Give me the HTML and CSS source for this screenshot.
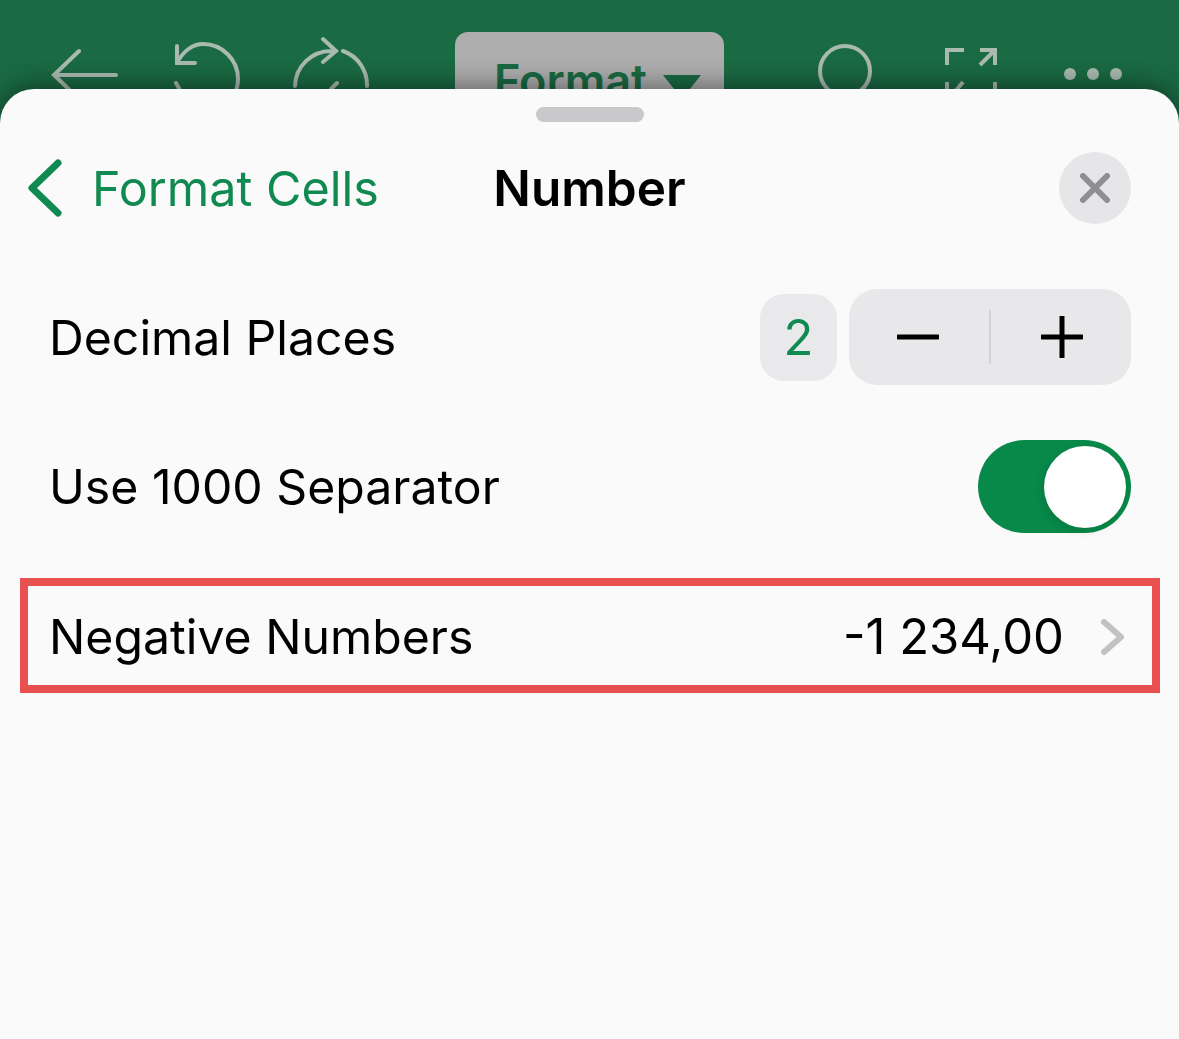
FILE: index.html
```html
<!DOCTYPE html>
<html lang="en">
<head>
    <meta charset="UTF-8">
    <title>Number format</title>
    <link rel="stylesheet" href="styles.css">
</head>
<body>
    <!-- toolbar, mostly hidden behind the sheet -->
    <div class="toolbar">
        <svg class="tool tool_back" viewBox="0 0 66 70"><path d="M64 26H3M27 2 2 26l25 24"/></svg>
        <svg class="tool tool_undo" viewBox="0 0 66 74"><path d="M2 3V20H20M2 20C8 8 18 1 28 1A35 35 0 0 1 63 36C63 54 48 71 28 71M1 40l5 9"/></svg>
        <svg class="tool tool_redo" viewBox="0 0 76 70"><path d="M30 1 43 13 30 24M43 13H38A36 36 0 0 0 2 48M50 13A36 36 0 0 1 74 48M38 51l6-6"/></svg>
        <div class="format_btn">
            <span class="format_txt">Format</span>
            <span class="format_arrow"></span>
        </div>
        <svg class="tool tool_search" viewBox="0 0 56 70"><circle cx="27" cy="27" r="25"/><path d="M44 45l12 12"/></svg>
        <svg class="tool tool_expand" viewBox="0 0 54 70"><path d="M19 3H2V18M35 18 50 3M35 3H50V18M2 35V52M18 35 4 52M50 35V52"/></svg>
        <div class="dots"><span></span><span></span><span></span></div>
    </div>

    <!-- sheet -->
    <div class="sheet">
        <div class="handle"></div>
        <div class="sheet_h">
            <div class="back">
                <svg class="back_icon" viewBox="0 0 36 58"><path d="M31 4 5 29l26 25"/></svg>
                <span>Format Cells</span>
            </div>
            <div class="title">Number</div>
            <div class="close">
                <svg viewBox="0 0 30 30"><path d="M3 3l24 24M27 3 3 27"/></svg>
            </div>
        </div>

        <div class="row row_decimal">
            <div class="label">Decimal Places</div>
            <div class="value_box">2</div>
            <div class="stepper">
                <svg class="step_icon" viewBox="0 0 42 42"><path d="M1 21h40"/></svg>
                <div class="step_line"></div>
                <svg class="step_icon" viewBox="0 0 42 42"><path d="M1 21h40M21 1v40"/></svg>
            </div>
        </div>

        <div class="row row_separator">
            <div class="label">Use 1000 Separator</div>
            <div class="switch"><div class="knob"></div></div>
        </div>

        <div class="row_negative">
            <div class="label">Negative Numbers</div>
            <div class="value">-1 234,00</div>
            <svg class="chevron" viewBox="0 0 24 36"><path d="M3 3l17 15L3 33"/></svg>
        </div>
    </div>
</body>
</html>
```

FILE: styles.css
```css
* {
    box-sizing: border-box;
}
html, body {
    height: 100%;
}
body {
    margin: 0;
    height: 1039px;
    overflow: hidden;
    background-color: #1a6a43;
    font-family: Inter, "Liberation Sans", sans-serif;
    color: #000;
}

/* toolbar */
.toolbar {
    display: flex;
    align-items: flex-start;
    height: 89px;
    overflow: hidden;
    padding-left: 52px;
}
.tool {
    flex: none;
    fill: none;
    stroke: #a9baaf;
    stroke-width: 4;
    stroke-linecap: round;
    overflow: visible;
}
.tool_back {
    width: 66px;
    height: 70px;
    margin-top: 49px;
}
.tool_undo {
    width: 66px;
    height: 74px;
    margin-top: 43px;
    margin-left: 57px;
}
.tool_redo {
    width: 76px;
    height: 70px;
    margin-top: 38px;
    margin-left: 52px;
}
.format_btn {
    display: flex;
    align-items: flex-start;
    gap: 16px;
    flex: none;
    width: 269px;
    height: 90px;
    margin-top: 32px;
    margin-left: 86px;
    padding: 22px 0 0 39px;
    background-color: #aeaeae;
    border-radius: 13px;
}
.format_txt {
    font-size: 45px;
    line-height: 54px;
    font-weight: 600;
    color: #1a6a43;
}
.format_arrow {
    width: 0;
    height: 0;
    margin-top: 21px;
    border-left: 19px solid transparent;
    border-right: 19px solid transparent;
    border-top: 24px solid #1a6a43;
}
.tool_search {
    width: 56px;
    height: 70px;
    margin-top: 44px;
    margin-left: 94px;
}
.tool_expand {
    width: 54px;
    height: 70px;
    margin-top: 47px;
    margin-left: 71px;
    stroke-linecap: butt;
}
.dots {
    display: flex;
    gap: 11px;
    margin-top: 68px;
    margin-left: 65px;
}
.dots span {
    width: 12px;
    height: 12px;
    border-radius: 50%;
    background-color: #a9baaf;
}

/* sheet */
.sheet {
    position: relative;
    height: 950px;
    background-color: #fafafa;
    border-radius: 34px 34px 0 0;
    box-shadow: 0 -3px 26px rgba(0, 0, 0, 0.45);
}
.handle {
    width: 108px;
    height: 15px;
    margin: 0 auto;
    position: relative;
    top: 18px;
    background-color: #c9c9cb;
    border-radius: 8px;
}
.sheet_h {
    display: grid;
    grid-template-columns: 1fr auto 1fr;
    align-items: center;
    height: 72px;
    margin-top: 48px;
    padding: 0 48px;
}
.back {
    display: flex;
    align-items: center;
    gap: 29px;
    margin-left: -21px;
    font-size: 48.5px;
    color: #108a50;
}
.back_icon {
    width: 36px;
    height: 58px;
    fill: none;
    stroke: #108a50;
    stroke-width: 7;
    stroke-linecap: round;
    stroke-linejoin: round;
}
.title {
    font-size: 49.5px;
    font-weight: 600;
}
.close {
    display: flex;
    align-items: center;
    justify-content: center;
    justify-self: end;
    width: 72px;
    height: 72px;
    background-color: #e6e6e8;
    border-radius: 50%;
}
.close svg {
    width: 30px;
    height: 30px;
    fill: none;
    stroke: #8e8e93;
    stroke-width: 6;
    stroke-linecap: round;
}

/* rows */
.row {
    display: flex;
    align-items: center;
    padding: 0 48px 0 49px;
}
.row_decimal {
    height: 96px;
    margin-top: 65px;
}
.row_separator {
    height: 93px;
    margin-top: 55px;
}
.label {
    flex: 1;
    font-size: 48.2px;
}
.value_box {
    display: flex;
    align-items: center;
    justify-content: center;
    width: 77px;
    height: 87px;
    margin-right: 12px;
    font-size: 49px;
    color: #108a50;
    background-color: #e9e9eb;
    border-radius: 24px;
}
.stepper {
    display: flex;
    align-items: center;
    justify-content: space-between;
    width: 282px;
    height: 96px;
    padding: 0 48px;
    background-color: #e8e8ea;
    border-radius: 28px;
}
.step_icon {
    width: 42px;
    height: 42px;
    fill: none;
    stroke: #000;
    stroke-width: 5;
    stroke-linecap: round;
}
.step_line {
    width: 2px;
    height: 54px;
    background-color: #d2d2d4;
}
.switch {
    display: flex;
    justify-content: flex-end;
    align-items: center;
    width: 153px;
    height: 93px;
    padding-right: 5px;
    background-color: #078a49;
    border-radius: 47px;
}
.knob {
    width: 82px;
    height: 82px;
    background-color: #fff;
    border-radius: 50%;
    box-shadow: -2px 3px 10px rgba(0, 0, 0, 0.12);
}
.row_negative {
    display: flex;
    align-items: center;
    height: 115px;
    margin: 45px 19px 0 20px;
    padding: 2px 27px 0 21px;
    border: 8px solid #e95050;
}
.value {
    font-size: 49px;
}
.chevron {
    width: 24px;
    height: 36px;
    margin-left: 37px;
    fill: none;
    stroke: #c2c2c4;
    stroke-width: 6;
    stroke-linecap: round;
    stroke-linejoin: round;
}
```
